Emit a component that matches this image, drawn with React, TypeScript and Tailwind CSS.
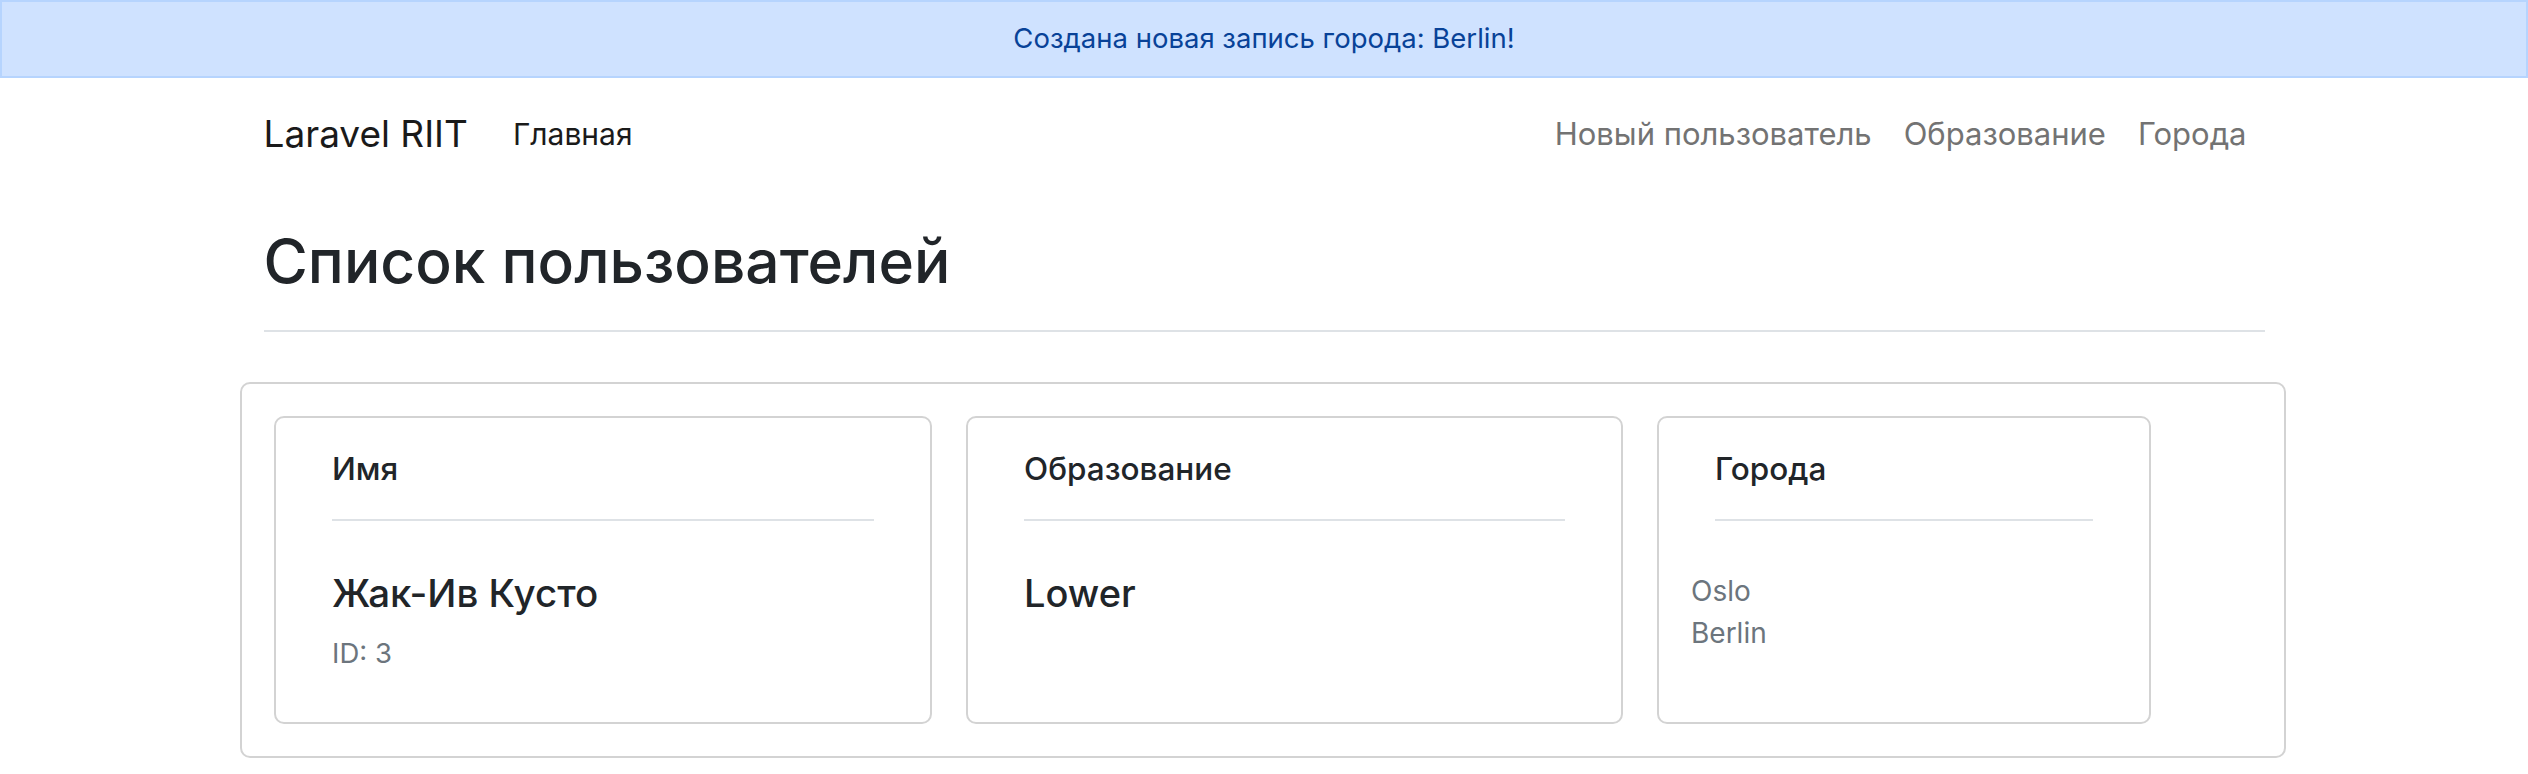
import React from "react";

const font = { fontFamily: "Inter, 'Noto Sans', sans-serif" };

function CardHeader({ title }: { title: string }) {
  return (
    <div className="px-[56px] pt-[33px]">
      <div className="text-[31.5px] leading-[36px] font-medium text-[#212529]">{title}</div>
      <div className="mt-[32px] h-[2px] bg-[#dee2e6]" />
    </div>
  );
}

export default function App() {
  return (
    <div className="min-h-screen bg-white" style={font}>
      <div className="h-[78px] border-2 border-[#b6d4fe] bg-[#cfe2ff] flex items-center justify-center text-[27.5px] text-[#084298]">
        Создана новая запись города: Berlin!
      </div>

      <div className="w-[2001px] mx-auto">
        <nav className="h-[112px] flex items-center">
          <div className="text-[37px] text-[#1a1a1a]">Laravel RIIT</div>
          <div className="ml-[45px] text-[30px] text-[#1a1a1a]">Главная</div>
          <div className="ml-auto flex items-center gap-[32px] pr-[18px] text-[31px] text-[#737373]">
            <span>Новый пользователь</span>
            <span>Образование</span>
            <span>Города</span>
          </div>
        </nav>

        <h1 className="mt-[33px] text-[60.5px] leading-[77px] font-medium text-[#212529]">Список пользователей</h1>
        <div className="mt-[30px] h-[2px] bg-[#dee2e6]" />
      </div>

      <div className="w-[2046px] mx-auto mt-[50px] -translate-x-px border-2 border-[#d3d3d3] rounded-[10px] p-[32px]">
        <div className="flex gap-[34px]">
          <div className="w-[658px] h-[308px] border-2 border-[#d3d3d3] rounded-[10px]">
            <CardHeader title="Имя" />
            <div className="px-[56px] pt-[49px]">
              <div className="text-[38.5px] leading-[46px] font-medium text-[#212529]">Жак-Ив Кусто</div>
              <div className="mt-[18px] text-[27.5px] leading-[39px] text-[#6c757d]">ID: 3</div>
            </div>
          </div>
          <div className="w-[657px] h-[308px] border-2 border-[#d3d3d3] rounded-[10px]">
            <CardHeader title="Образование" />
            <div className="px-[56px] pt-[49px]">
              <div className="text-[38px] leading-[46px] font-medium text-[#212529]">Lower</div>
            </div>
          </div>
          <div className="w-[494px] h-[308px] border-2 border-[#d3d3d3] rounded-[10px]">
            <CardHeader title="Города" />
            <div className="px-[32px] pt-[49px] text-[28px] leading-[42px] text-[#6c757d]">
              <div>Oslo</div>
              <div>Berlin</div>
            </div>
          </div>
        </div>
      </div>
    </div>
  );
}
